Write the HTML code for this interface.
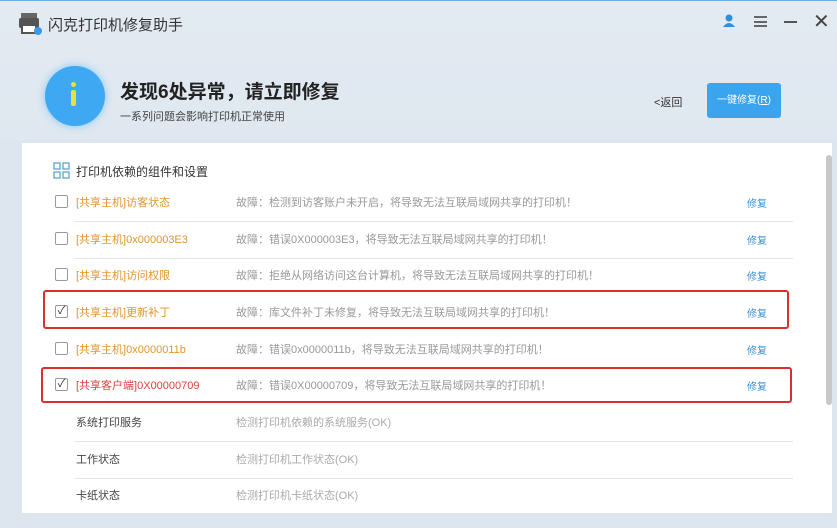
<!DOCTYPE html>
<html><head><meta charset="utf-8"><style>
*{margin:0;padding:0;box-sizing:border-box}
body{width:837px;height:528px;overflow:hidden;background:#dde6ef;font-family:"Liberation Sans","Noto Sans CJK SC",sans-serif;position:relative}
.a{position:absolute}
.top{left:0;top:0;width:837px;height:140px;background:linear-gradient(#e3eaf2,#dfe7f0);border-top:1px solid #6aaee0}
.panel{left:22px;top:143px;width:810px;height:370px;background:#fff}
.row{position:absolute;left:0;width:800px;height:37px;font-size:11px}
.row .cb{position:absolute;left:33px;top:12px;width:13px;height:13px;border:1px solid #999;border-radius:2px;background:#fff}
.row .lb{position:absolute;left:54px;top:11px;color:#e0952e}
.row .ds{position:absolute;left:214px;top:11px;color:#999}
.row .fx{position:absolute;left:725px;top:12px;color:#3a8fd8;font-size:10px}
.sep{position:absolute;left:53px;width:718px;height:1px;background:#e4e4e4}
.red{position:absolute;border:2px solid #d8312b;border-radius:3px}
</style></head><body>
<div class="a top"></div>
<svg class="a" style="left:18px;top:11px" width="26" height="26" viewBox="0 0 26 26"><rect x="3" y="2" width="16" height="6" fill="#666"/><rect x="1" y="7" width="20" height="10" rx="2" fill="#555"/><rect x="4" y="14" width="14" height="8" fill="#fff" stroke="#555" stroke-width="2"/><circle cx="20" cy="20" r="4" fill="#3a9ae8"/></svg>
<div class="a" style="left:48px;top:14px;font-size:15px;color:#333">闪克打印机修复助手</div>
<svg class="a" style="left:722px;top:14px" width="14" height="14"><circle cx="7" cy="4" r="3.5" fill="#2d8fe0"/><path d="M1 13 Q7 5 13 13Z" fill="#2d8fe0"/></svg>
<div class="a" style="left:754px;top:16px;width:13px;height:11px;border-top:2px solid #666;border-bottom:2px solid #666"></div>
<div class="a" style="left:754px;top:21px;width:13px;height:2px;background:#666"></div>
<div class="a" style="left:784px;top:21px;width:13px;height:2px;background:#555"></div>
<div class="a" style="left:813px;top:9px;font-size:20px;color:#444">✕</div>
<div class="a" style="left:45px;top:66px;width:60px;height:60px;border-radius:50%;background:#3ea8f2;box-shadow:0 0 8px #7cc6f6"></div>
<div class="a" style="left:71px;top:82px;width:5px;height:5px;background:#e8e33a;border-radius:50%"></div>
<div class="a" style="left:71px;top:90px;width:5px;height:16px;background:#e8e33a;border-radius:2px"></div>
<div class="a" style="left:120px;top:77px;font-size:19px;font-weight:bold;color:#222">发现6处异常，请立即修复</div>
<div class="a" style="left:120px;top:108px;font-size:11px;color:#444">一系列问题会影响打印机正常使用</div>
<div class="a" style="left:654px;top:94px;font-size:11px;color:#333">&lt;返回</div>
<div class="a" style="left:707px;top:83px;width:74px;height:35px;background:#3aa5ee;border-radius:3px;color:#fff;font-size:10px;text-align:center;line-height:35px">一键修复(<u>R</u>)</div>
<div class="a panel">
<svg style="position:absolute;left:31px;top:19px" width="17" height="17" fill="none" stroke="#5aa6c8" stroke-width="1.3"><rect x="1" y="1" width="6" height="6"/><rect x="10" y="1" width="6" height="6"/><rect x="1" y="10" width="6" height="6"/><rect x="10" y="10" width="6" height="6"/></svg>
<div style="position:absolute;left:54px;top:20px;font-size:12px;color:#333">打印机依赖的组件和设置</div>
<div class="row" style="top:40px"><div class="cb"></div><div class="lb">[共享主机]访客状态</div><div class="ds">故障：检测到访客账户未开启，将导致无法互联局域网共享的打印机！</div><div class="fx">修复</div></div>
<div class="sep" style="top:78px"></div>
<div class="row" style="top:77px"><div class="cb"></div><div class="lb">[共享主机]0x000003E3</div><div class="ds">故障：错误0X000003E3，将导致无法互联局域网共享的打印机！</div><div class="fx">修复</div></div>
<div class="sep" style="top:115px"></div>
<div class="row" style="top:113px"><div class="cb"></div><div class="lb">[共享主机]访问权限</div><div class="ds">故障：拒绝从网络访问这台计算机，将导致无法互联局域网共享的打印机！</div><div class="fx">修复</div></div>
<div class="row" style="top:150px"><div class="cb" style="font-size:11px;line-height:11px;text-align:center;color:#333">✓</div><div class="lb">[共享主机]更新补丁</div><div class="ds">故障：库文件补丁未修复，将导致无法互联局域网共享的打印机！</div><div class="fx">修复</div></div>
<div class="red" style="left:21px;top:147px;width:746px;height:39px"></div>
<div class="row" style="top:187px"><div class="cb"></div><div class="lb">[共享主机]0x0000011b</div><div class="ds">故障：错误0x0000011b，将导致无法互联局域网共享的打印机！</div><div class="fx">修复</div></div>
<div class="row" style="top:223px"><div class="cb" style="font-size:11px;line-height:11px;text-align:center;color:#333">✓</div><div class="lb" style="color:#d9423a">[共享客户端]0X00000709</div><div class="ds">故障：错误0X00000709，将导致无法互联局域网共享的打印机！</div><div class="fx">修复</div></div>
<div class="red" style="left:19px;top:224px;width:751px;height:36px"></div>
<div class="row" style="top:260px"><div class="lb" style="color:#444">系统打印服务</div><div class="ds" style="color:#aaa">检测打印机依赖的系统服务(OK)</div></div>
<div class="sep" style="top:298px"></div>
<div class="row" style="top:297px"><div class="lb" style="color:#444">工作状态</div><div class="ds" style="color:#aaa">检测打印机工作状态(OK)</div></div>
<div class="sep" style="top:335px"></div>
<div class="row" style="top:333px"><div class="lb" style="color:#444">卡纸状态</div><div class="ds" style="color:#aaa">检测打印机卡纸状态(OK)</div></div>
<div style="position:absolute;left:804px;top:12px;width:6px;height:250px;background:#c8c8c8;border-radius:3px"></div>
</div>
</body></html>
